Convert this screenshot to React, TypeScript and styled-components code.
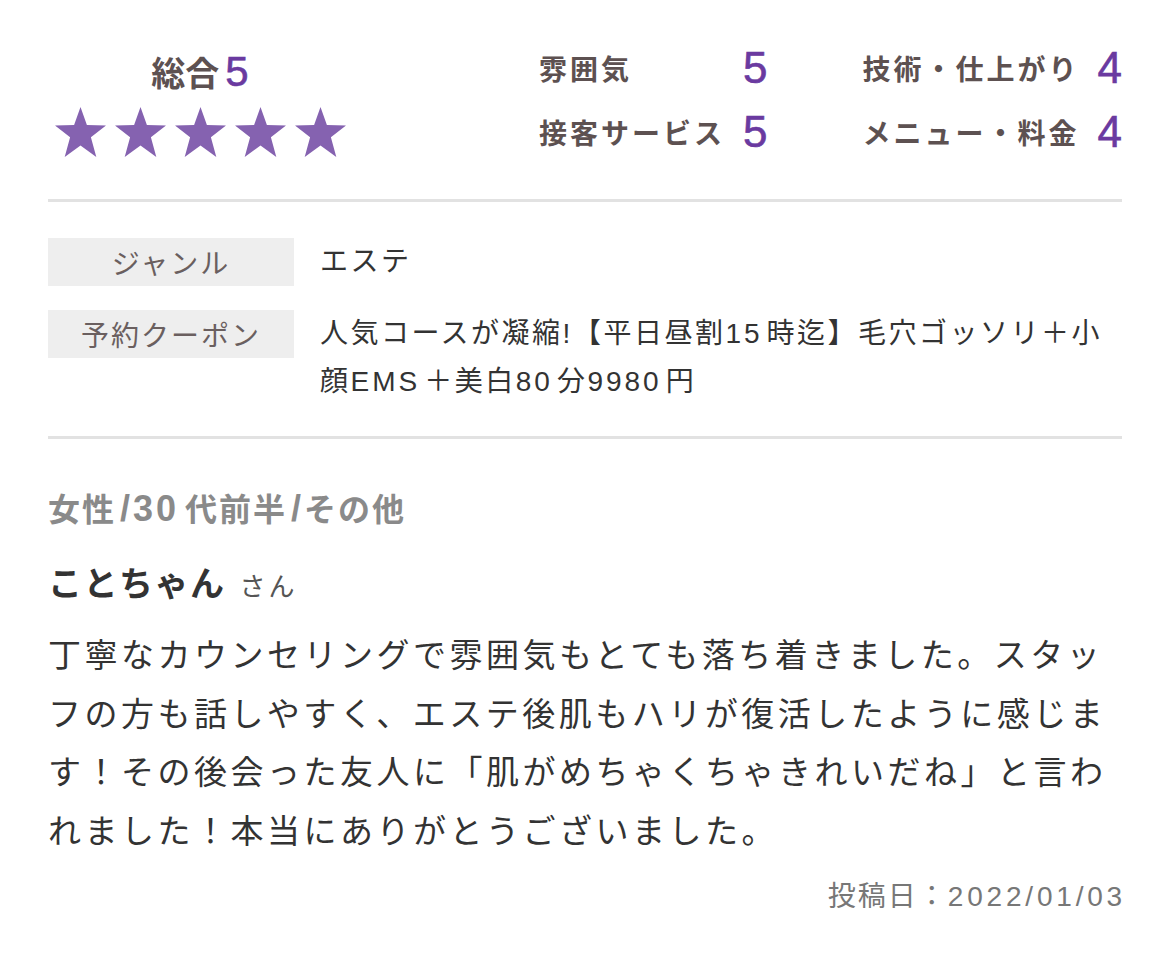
import React from "react";
import styled, { createGlobalStyle } from "styled-components";

const Global = createGlobalStyle`
  html, body { margin: 0; padding: 0; background: #fff; }
  body { font-family: "Liberation Sans", "Noto Sans CJK JP", sans-serif; }
`;

const Page = styled.div`
  width: 1074px;
  padding: 0 48px;
  font-family: "Liberation Sans", "Noto Sans CJK JP", sans-serif;
`;

const Header = styled.div`
  display: flex;
  justify-content: space-between;
  align-items: flex-start;
  padding: 43px 0 42px;
  border-bottom: 3px solid #e2e2e2;
`;

const Overall = styled.div`
  display: flex;
  flex-direction: column;
  align-items: center;
  width: 300px;
  margin: 5px 0 0 2px;
`;

const OverallTitle = styled.div`
  font-size: 34px;
  font-weight: bold;
  color: #5d5151;
  line-height: 48px;
  display: flex;
  align-items: baseline;
  gap: 6px;
`;

const Score = styled.span<{ $size: number }>`
  font-size: ${(p) => p.$size}px;
  font-weight: normal;
  color: #6a3aa0;
  font-family: "Liberation Sans", sans-serif;
  -webkit-text-stroke: 0.6px #6a3aa0;
`;

const Stars = styled.div`
  display: flex;
  gap: 9px;
  margin-top: 9px;
`;

const Ratings = styled.div`
  display: grid;
  grid-template-columns: auto auto;
  column-gap: 95px;
  row-gap: 14px;
`;

const RatingCell = styled.div`
  display: flex;
  justify-content: space-between;
  align-items: center;
  gap: 18px;
  height: 50px;
`;

const RatingLabel = styled.span`
  font-size: 28px;
  font-weight: bold;
  letter-spacing: 3px;
  color: #5d5151;
`;

const Table = styled.div`
  display: flex;
  flex-direction: column;
  gap: 24px;
  padding: 36px 0 30px;
  border-bottom: 3px solid #e2e2e2;
`;

const Row = styled.div`
  display: flex;
  align-items: flex-start;
  gap: 26px;
`;

const Label = styled.div`
  flex: 0 0 246px;
  height: 48px;
  background: #eeeeee;
  color: #6a5f5f;
  font-size: 28px;
  letter-spacing: 2px;
  display: flex;
  align-items: center;
  justify-content: center;
`;

const Value = styled.div`
  flex: 1;
  font-size: 28px;
  letter-spacing: 2.5px;
  line-height: 48px;
  color: #333;
`;

const Latin = styled.span`
  letter-spacing: 3px;
  padding-right: 4px;
`;

const Meta = styled.div`
  margin-top: 48px;
  font-size: 32px;
  font-weight: bold;
  color: #8a8a8a;
  letter-spacing: 2px;
  line-height: 44px;
`;

const MetaSlash = styled.span`
  font-size: 36px;
  letter-spacing: 0;
  padding: 0 3px 0 4px;
`;

const MetaDigits = styled.span`
  font-size: 36px;
  letter-spacing: 3px;
  padding-right: 6px;
`;

const NameLine = styled.div`
  margin-top: 30px;
  display: flex;
  align-items: baseline;
  gap: 14px;
  line-height: 44px;
`;

const Name = styled.span`
  font-size: 34px;
  font-weight: bold;
  color: #333;
  letter-spacing: 1.5px;
`;

const San = styled.span`
  font-size: 26px;
  color: #555;
  letter-spacing: 3px;
`;

const Body = styled.p`
  margin: 18px 0 0;
  font-size: 33px;
  line-height: 58.5px;
  letter-spacing: 3.5px;
  color: #333;
`;

const Posted = styled.div`
  margin-top: 16px;
  text-align: right;
  font-size: 28px;
  color: #777;
  letter-spacing: 2px;
  line-height: 40px;
  margin-right: -2px;
`;

const PostedDate = styled.span`
  letter-spacing: 3.8px;
  margin-right: -2px;
`;

const Star = () => (
  <svg width="51" height="50" viewBox="0 0 51 50">
    <polygon
      points="25.5,0 31.9,17.9 51,18.5 35.9,30.3 41.3,50 25.5,38.6 9.7,50 15.1,30.3 0,18.5 19.1,17.9"
      fill="#8562b0"
    />
  </svg>
);

const ratings = [
  { label: "雰囲気", score: 5 },
  { label: "技術・仕上がり", score: 4 },
  { label: "接客サービス", score: 5 },
  { label: "メニュー・料金", score: 4 },
];

export default function App() {
  return (
    <Page>
      <Global />
      <Header>
        <Overall>
          <OverallTitle>
            総合<Score $size={42}>5</Score>
          </OverallTitle>
          <Stars>
            {[0, 1, 2, 3, 4].map((i) => (
              <Star key={i} />
            ))}
          </Stars>
        </Overall>
        <Ratings>
          {ratings.map((r) => (
            <RatingCell key={r.label}>
              <RatingLabel>{r.label}</RatingLabel>
              <Score $size={44}>{r.score}</Score>
            </RatingCell>
          ))}
        </Ratings>
      </Header>
      <Table>
        <Row>
          <Label>ジャンル</Label>
          <Value>エステ</Value>
        </Row>
        <Row>
          <Label>予約クーポン</Label>
          <Value>
            人気コースが凝縮!【平日昼割<Latin>15</Latin>時迄】毛穴ゴッソリ＋小顔<Latin>EMS</Latin>＋美白<Latin>80</Latin>分<Latin>9980</Latin>円
          </Value>
        </Row>
      </Table>
      <Meta>
        女性<MetaSlash>/</MetaSlash><MetaDigits>30</MetaDigits>代前半<MetaSlash>/</MetaSlash>その他
      </Meta>
      <NameLine>
        <Name>ことちゃん</Name>
        <San>さん</San>
      </NameLine>
      <Body>
        丁寧なカウンセリングで雰囲気もとても落ち着きました。スタッフの方も話しやすく、エステ後肌もハリが復活したように感じます！その後会った友人に「肌がめちゃくちゃきれいだね」と言われました！本当にありがとうございました。
      </Body>
      <Posted>
        投稿日：<PostedDate>2022/01/03</PostedDate>
      </Posted>
    </Page>
  );
}
